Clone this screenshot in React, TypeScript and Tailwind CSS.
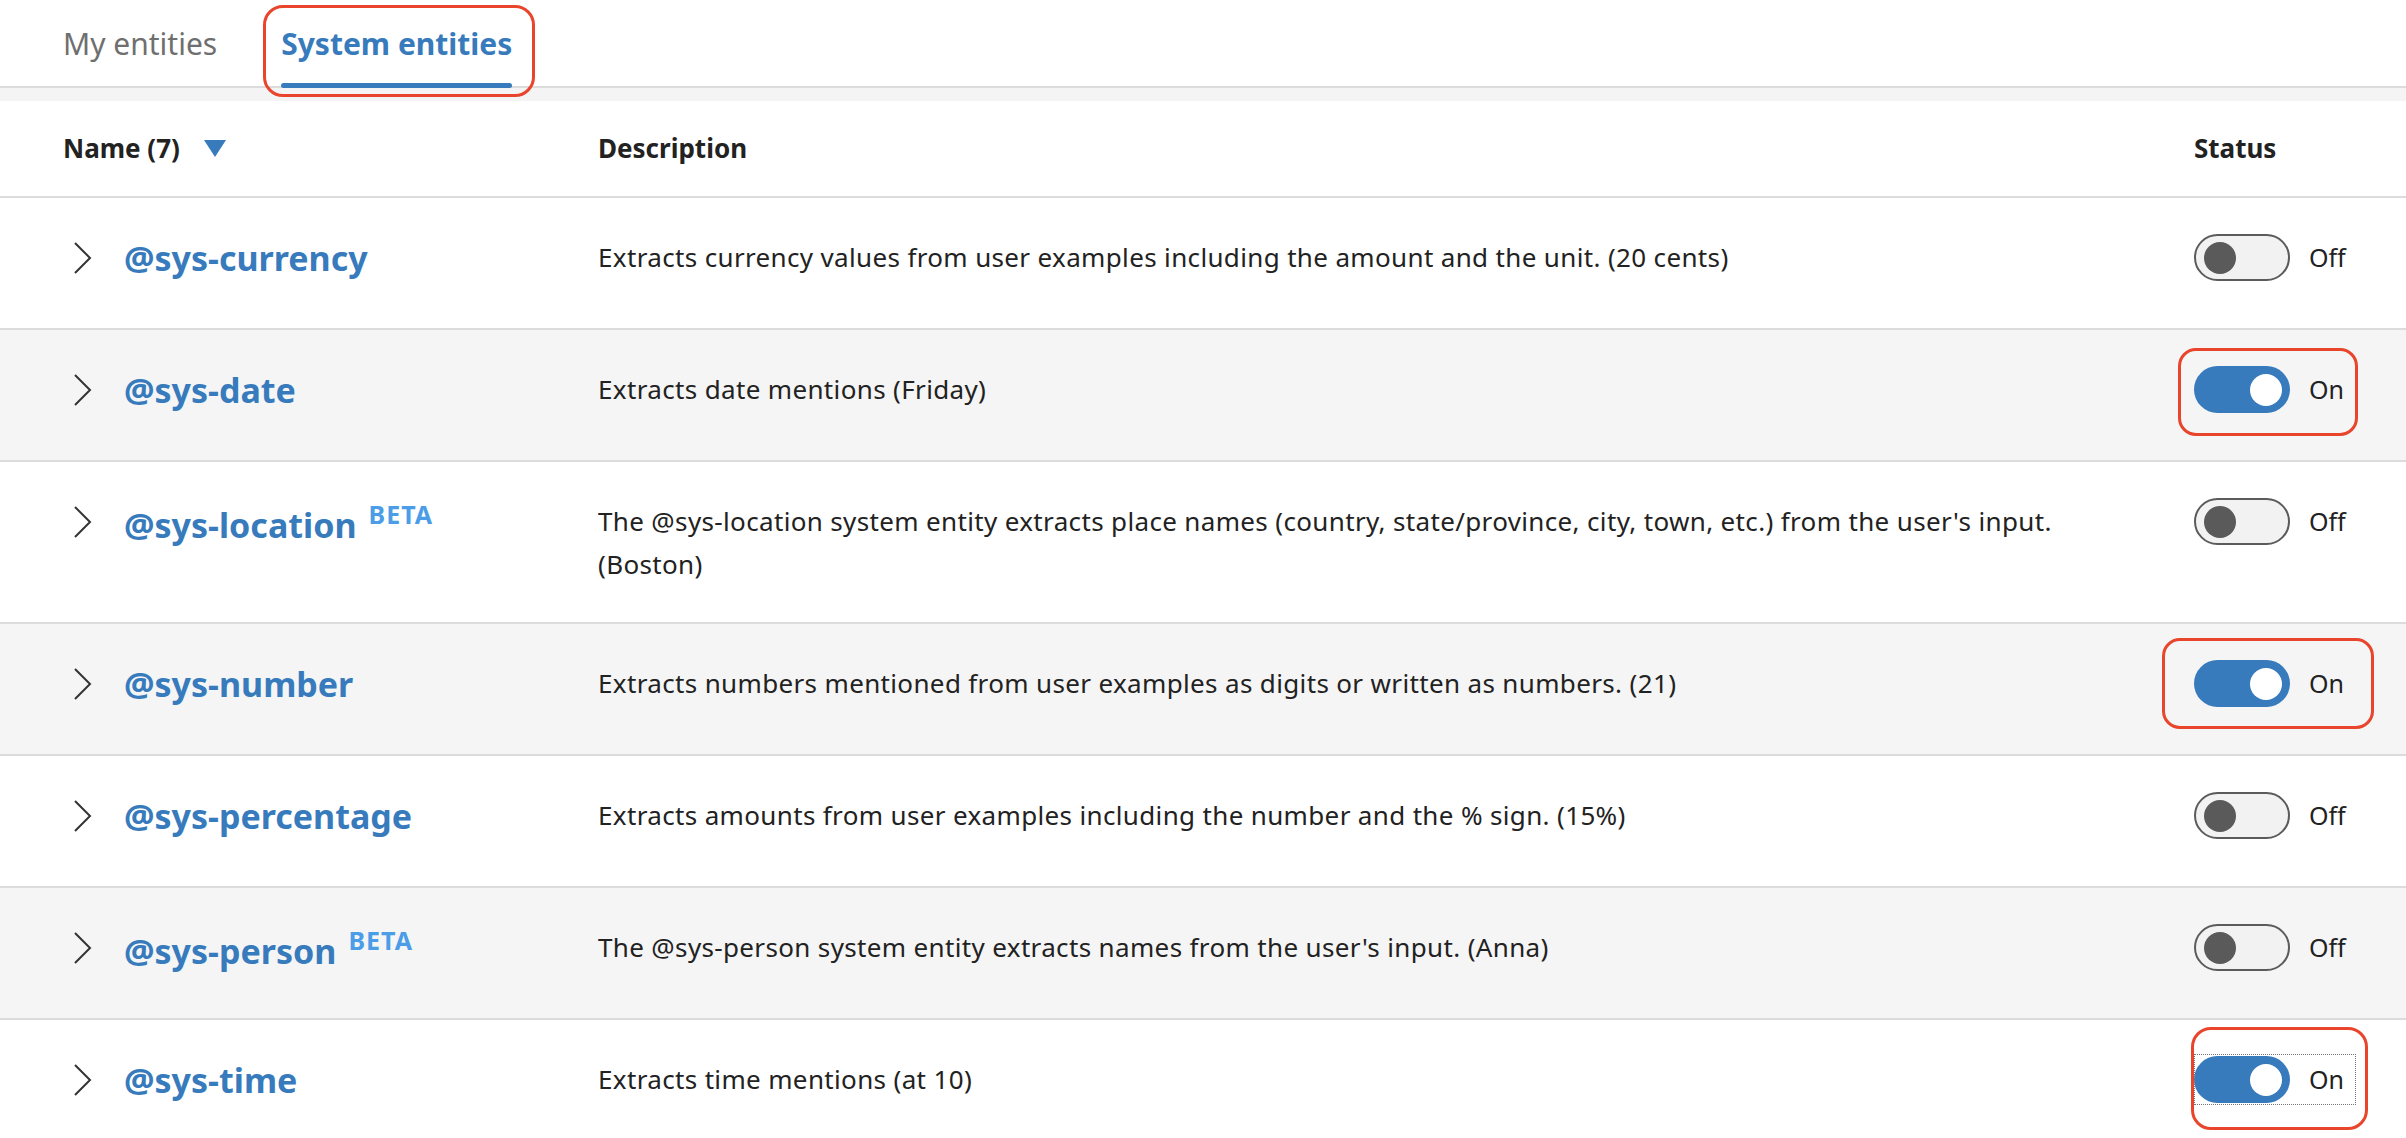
import React from 'react';

type Entity = {
  name: string;
  description: string;
  beta?: boolean;
  on: boolean;
  // annotation box around the toggle, offsets are relative to the toggle
  mark?: 'date' | 'number' | 'time';
};

const entities: Entity[] = [
  {
    name: '@sys-currency',
    description: 'Extracts currency values from user examples including the amount and the unit. (20 cents)',
    on: false,
  },
  { name: '@sys-date', description: 'Extracts date mentions (Friday)', on: true, mark: 'date' },
  {
    name: '@sys-location',
    beta: true,
    description:
      "The @sys-location system entity extracts place names (country, state/province, city, town, etc.) from the user's input. (Boston)",
    on: false,
  },
  {
    name: '@sys-number',
    description: 'Extracts numbers mentioned from user examples as digits or written as numbers. (21)',
    on: true,
    mark: 'number',
  },
  {
    name: '@sys-percentage',
    description: 'Extracts amounts from user examples including the number and the % sign. (15%)',
    on: false,
  },
  {
    name: '@sys-person',
    beta: true,
    description: "The @sys-person system entity extracts names from the user's input. (Anna)",
    on: false,
  },
  { name: '@sys-time', description: 'Extracts time mentions (at 10)', on: true, mark: 'time' },
];

const Chevron = () => (
  <svg width="18" height="32" viewBox="0 0 18 32" fill="none">
    <polyline points="1,1 16,16 1,31" stroke="#333" strokeWidth="2" />
  </svg>
);

const Toggle = ({ on }: { on: boolean }) => (
  <div className="flex items-center gap-[19px]">
    {on ? (
      <div className="flex h-[47px] w-[96px] items-center justify-end rounded-full bg-[#377bbd] pr-[8px]">
        <div className="h-[32px] w-[32px] rounded-full bg-white" />
      </div>
    ) : (
      <div className="flex h-[47px] w-[96px] items-center rounded-full border-2 border-[#5b5b5b] bg-[#f2f2f2] pl-[8px]">
        <div className="h-[32px] w-[32px] rounded-full bg-[#5a5a5a]" />
      </div>
    )}
    <span className="text-[25px] text-[#222]">{on ? 'On' : 'Off'}</span>
  </div>
);

const Mark = ({ kind }: { kind: 'date' | 'number' | 'time' }) => {
  if (kind === 'date')
    return (
      <div className="pointer-events-none absolute left-[-16px] top-[-18px] h-[88px] w-[180px] rounded-[18px] border-[3px] border-[#e8452c]" />
    );
  if (kind === 'number')
    return (
      <div className="pointer-events-none absolute left-[-32px] top-[-22px] h-[91px] w-[212px] rounded-[18px] border-[3px] border-[#e8452c]" />
    );
  return (
    <>
      <div className="pointer-events-none absolute left-0 top-[-2px] h-[51px] w-[162px] border border-dotted border-[#777]" />
      <div className="pointer-events-none absolute left-[-3px] top-[-29px] h-[103px] w-[177px] rounded-[20px] border-[3px] border-[#e8452c]" />
    </>
  );
};

const App = () => {
  return (
    <div className="min-h-screen bg-white font-['Noto_Sans',sans-serif] text-[#222]">
      {/* tabs */}
      <div className="flex h-[88px] gap-[64px] border-b-2 border-[#dcdcdc] pl-[63px]">
        <button className="flex h-[86px] items-center text-[30px] text-[#6f6f6f]">My entities</button>
        <button className="relative flex h-[86px] items-center text-[30px] font-bold text-[#377bbd]">
          System entities
          <span className="absolute bottom-[-2px] left-0 right-0 h-[5px] rounded-full bg-[#377bbd]" />
          <span className="pointer-events-none absolute bottom-[-11px] left-[-18px] right-[-23px] top-[5px] rounded-[20px] border-[3px] border-[#e8452c]" />
        </button>
      </div>
      <div className="h-[13px] bg-[#f4f4f4]" />

      {/* header */}
      <div className="grid h-[97px] grid-cols-[535px_1596px_1fr] items-center border-b-2 border-[#dcdcdc] pl-[63px] text-[26px] font-bold text-[#222]">
        <div className="flex items-center gap-[24px]">
          <span>Name (7)</span>
          <svg width="22" height="17" viewBox="0 0 22 17">
            <polygon points="0,0 22,0 11,17" fill="#377bbd" />
          </svg>
        </div>
        <div>Description</div>
        <div>Status</div>
      </div>

      {/* rows */}
      {entities.map((e, i) => (
        <div
          key={e.name}
          className={`grid min-h-[132px] grid-cols-[535px_1596px_1fr] items-start border-b-2 border-[#dcdcdc] pb-[36px] pl-[63px] pt-[36px] ${
            i % 2 === 1 ? 'bg-[#f5f5f5]' : 'bg-white'
          }`}
        >
          <div className="flex h-[47px] items-center gap-[32px] pl-[11px]">
            <Chevron />
            <span className="text-[34px] font-bold leading-none text-[#377bbd]">
              {e.name}
              {e.beta && (
                <span className="ml-[12px] align-[14px] text-[25px] font-bold tracking-[1px] text-[#4a9de6]">
                  BETA
                </span>
              )}
            </span>
          </div>
          <div className="mt-[2px] pr-[80px] text-[26px] leading-[43px] tracking-[0.35px] text-[#222]">
            {e.description}
          </div>
          <div className="relative w-fit">
            <Toggle on={e.on} />
            {e.mark && <Mark kind={e.mark} />}
          </div>
        </div>
      ))}
    </div>
  );
};

export default App;
